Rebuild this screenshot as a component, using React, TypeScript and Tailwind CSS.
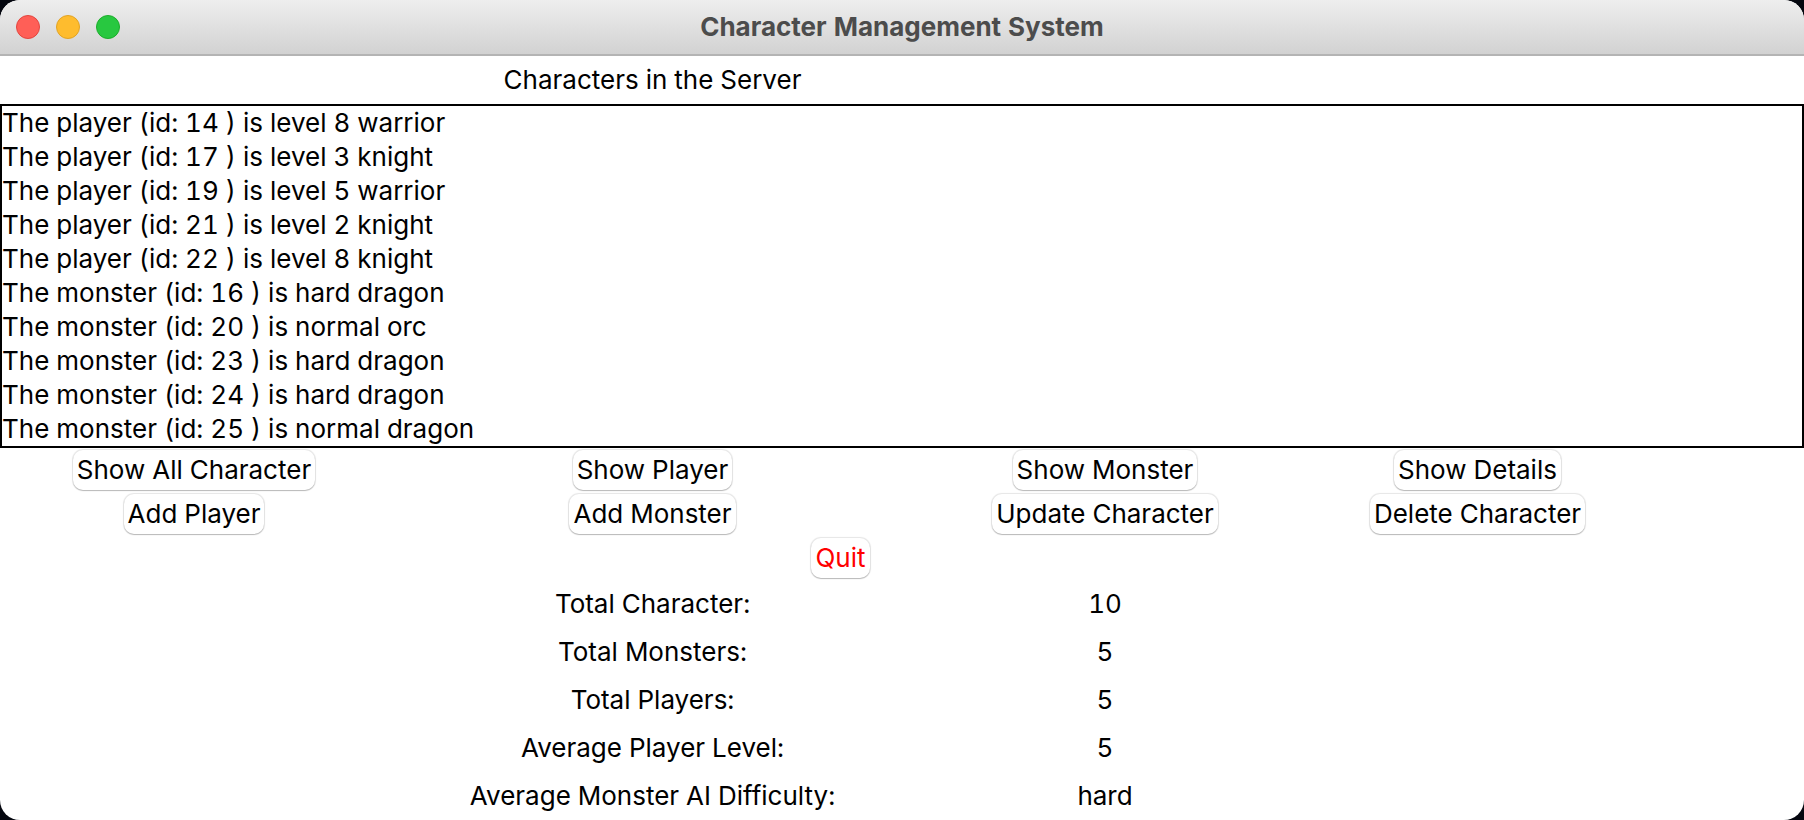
const characters = [
  "The player (id: 14 ) is level 8 warrior",
  "The player (id: 17 ) is level 3 knight",
  "The player (id: 19 ) is level 5 warrior",
  "The player (id: 21 ) is level 2 knight",
  "The player (id: 22 ) is level 8 knight",
  "The monster (id: 16 ) is hard dragon",
  "The monster (id: 20 ) is normal orc",
  "The monster (id: 23 ) is hard dragon",
  "The monster (id: 24 ) is hard dragon",
  "The monster (id: 25 ) is normal dragon",
];

const actions = [
  ["Show All Character", "Show Player", "Show Monster", "Show Details"],
  ["Add Player", "Add Monster", "Update Character", "Delete Character"],
];

const stats = [
  ["Total Character:", "10"],
  ["Total Monsters:", "5"],
  ["Total Players:", "5"],
  ["Average Player Level:", "5"],
  ["Average Monster AI Difficulty:", "hard"],
];

const columns = "grid grid-cols-[388fr_529fr_376fr_369fr_142fr] justify-items-center items-center";

function ActionButton({ label, danger = false }: { label: string; danger?: boolean }) {
  return (
    <button
      type="button"
      className={`block h-10 rounded-[10px] bg-white px-1 whitespace-nowrap shadow-[0_0_1px_1px_rgba(0,0,0,0.1),0_1px_1px_rgba(0,0,0,0.2)] ${
        danger ? "text-[#ff0000]" : "text-black"
      }`}
    >
      {label}
    </button>
  );
}

function TitleBar() {
  return (
    <header className="grid h-14 grid-cols-[1fr_auto_1fr] items-center border-b-2 border-[#b4b4b4] bg-linear-to-b from-[#eeeeee] to-[#d2d2d2] px-4">
      <div className="flex gap-4">
        <button type="button" aria-label="Close" className="size-6 rounded-full border border-[#e2463f] bg-[#ff5f57]" />
        <button type="button" aria-label="Minimize" className="size-6 rounded-full border border-[#e1a325] bg-[#febc2e]" />
        <button type="button" aria-label="Zoom" className="size-6 rounded-full border border-[#1dad2b] bg-[#28c840]" />
      </div>
      <h1 className="font-bold text-[#4c4c4c]">Character Management System</h1>
    </header>
  );
}

export default function App() {
  return (
    <div className="min-h-screen bg-[#05070f]">
      <div className="min-h-screen overflow-hidden rounded-[20px] bg-white font-['Inter',sans-serif] text-[26px] leading-[34px] text-black tabular-nums">
        <TitleBar />
        <main>
          <div className={`${columns} h-12`}>
            <h2 className="col-start-2 whitespace-nowrap">Characters in the Server</h2>
          </div>
          <ul className="border-2 border-black">
            {characters.map((line) => (
              <li key={line}>{line}</li>
            ))}
          </ul>
          {actions.map((row) => (
            <div key={row[0]} className={`${columns} h-11`}>
              {row.map((label) => (
                <ActionButton key={label} label={label} />
              ))}
            </div>
          ))}
          <div className={`${columns} h-11`}>
            <div className="col-span-2 col-start-2">
              <ActionButton label="Quit" danger />
            </div>
          </div>
          <dl>
            {stats.map(([label, value]) => (
              <div key={label} className={`${columns} h-12`}>
                <dt className="col-start-2 whitespace-nowrap">{label}</dt>
                <dd>{value}</dd>
              </div>
            ))}
          </dl>
        </main>
      </div>
    </div>
  );
}
